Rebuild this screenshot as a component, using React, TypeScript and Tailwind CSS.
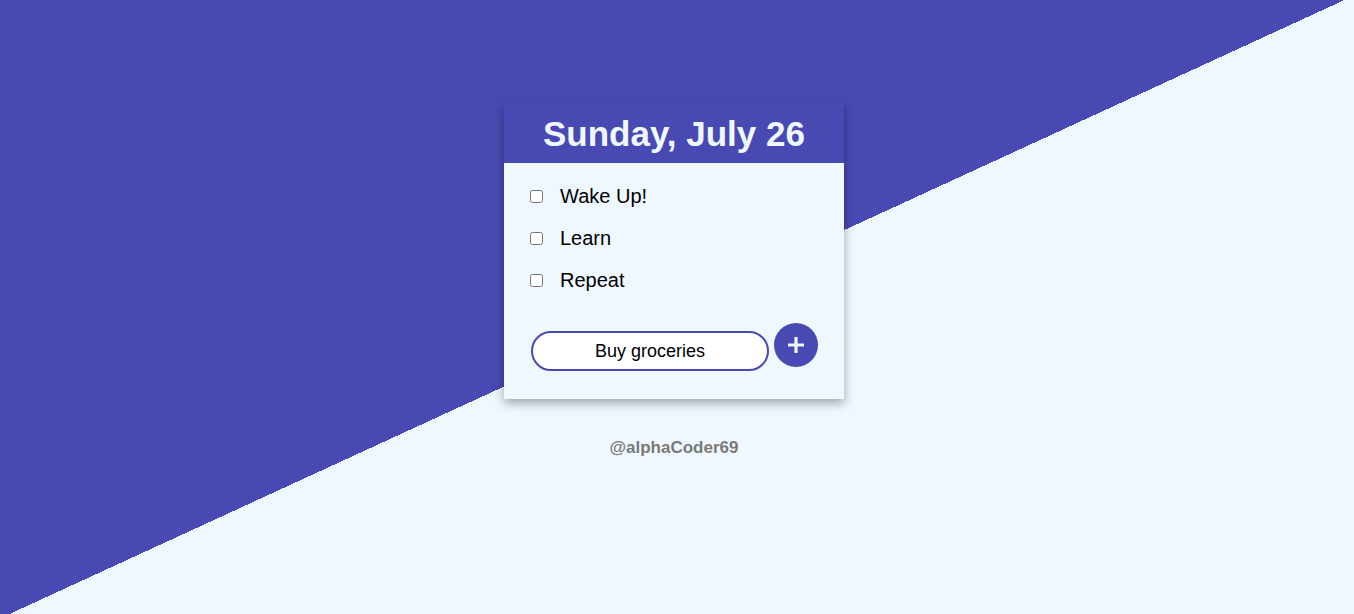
import React, { useState } from 'react';

const initialTodos = ['Wake Up!', 'Learn', 'Repeat'];

export default function App() {
  const [todos, setTodos] = useState(initialTodos);
  const [text, setText] = useState('Buy groceries');

  const addTodo = () => {
    if (!text.trim()) return;
    setTodos([...todos, text]);
    setText('');
  };

  return (
    <div className="min-h-screen w-full bg-[linear-gradient(155.3deg,#4949b4_50%,#f0f8ff_50%)] font-['Liberation_Sans',Arial,sans-serif] flex flex-col items-center pt-[103px]">
      <div className="w-[340px] bg-[#f0f8ff] shadow-[0_4px_10px_rgba(0,0,0,0.35)] -translate-x-[3px]">
        <div className="h-[60px] bg-[#4949b4] flex items-center justify-center">
          <h1 className="text-[35px] font-bold text-[#f0f8ff] leading-none">Sunday, July 26</h1>
        </div>
        <ul className="pt-[12px] pl-[26px]">
          {todos.map((t) => (
            <li key={t} className="h-[42px] flex items-center">
              <input type="checkbox" className="w-[13px] h-[13px] m-0" />
              <span className="ml-[17px] text-[20px] text-black">{t}</span>
            </li>
          ))}
        </ul>
        <div className="flex items-start pl-[27px] pt-[22px] pb-[28px]">
          <input
            value={text}
            onChange={(e) => setText(e.target.value)}
            className="mt-[8px] w-[238px] h-[40px] rounded-full border-2 border-[#4949b4] bg-white text-center text-[18px] text-black outline-none"
          />
          <button
            onClick={addTodo}
            className="ml-[5px] w-[44px] h-[44px] rounded-full bg-[#4949b4] flex items-center justify-center"
          >
            <svg width="20" height="20" viewBox="0 0 20 20">
              <path d="M10 2v16M2 10h16" stroke="#f0f8ff" strokeWidth="3.2" />
            </svg>
          </button>
        </div>
      </div>
      <p className="mt-[36px] text-[17px] font-bold text-[#7a7a7a] -translate-x-[3px]">@alphaCoder69</p>
    </div>
  );
}
